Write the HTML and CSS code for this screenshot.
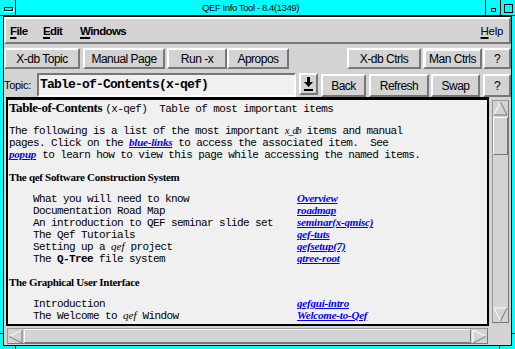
FILE: index.html
```html
<!DOCTYPE html>
<html lang="en">
<head>
    <meta charset="UTF-8">
    <meta name="viewport" content="width=device-width, initial-scale=1.0">
    <title>QEF Info Tool - 8.4(1349)</title>
    <link rel="stylesheet" href="styles.css">
</head>
<body>
<div class="window">
    <div class="titlebar">
        <div class="tb-box tb-menu"><span class="tb-bar"></span></div>
        <div class="tb-title">QEF Info Tool - 8.4(1349)</div>
        <div class="tb-box tb-right"><span class="tb-min"></span></div>
        <div class="tb-box tb-right"><span class="tb-max"></span></div>
    </div>

    <div class="client">
        <div class="menubar">
            <span class="menu menu-file"><u>F</u>ile</span>
            <span class="menu menu-edit"><u>E</u>dit</span>
            <span class="menu"><u>W</u>indows</span>
            <span class="menu menu-help"><u>H</u>elp</span>
        </div>

        <div class="toolbar">
            <button class="btn" style="width:76px">X-db Topic</button>
            <button class="btn" style="width:82px; margin-left:3px">Manual Page</button>
            <button class="btn" style="width:60px; margin-left:2px">Run -x</button>
            <button class="btn" style="width:62px">Apropos</button>
            <button class="btn push-right" style="width:74px">X-db Ctrls</button>
            <button class="btn btn-default" style="width:59px; margin-left:2px">Man Ctrls</button>
            <button class="btn" style="width:28px; margin-left:1px">?</button>
        </div>

        <div class="topicrow">
            <label class="topic-label">Topic:</label>
            <div class="topic-input">Table-of-Contents(x-qef)</div>
            <button class="btn btn-icon" title="Load">
                <svg width="9" height="14" viewBox="0 0 9 14">
                    <rect x="3" y="0" width="3" height="5" fill="#000"/>
                    <polygon points="0,5 9,5 4.5,10" fill="#000"/>
                    <rect x="0" y="12" width="9" height="2" fill="#000"/>
                </svg>
            </button>
            <button class="btn btn-tall" style="width:45px; margin-left:3px">Back</button>
            <button class="btn btn-tall" style="width:60px; margin-left:3px">Refresh</button>
            <button class="btn btn-tall" style="width:49px; margin-left:2px">Swap</button>
            <button class="btn btn-tall" style="width:28px; margin-left:3px">?</button>
        </div>

        <div class="viewer">
            <div class="pane">
                <div class="doc-title"><span class="h1">Table-of-Contents</span><span class="mono">(x-qef)  Table of most important items</span></div>

                <div class="para">
                    <div class="ln">The following is a list of the most important <i class="em em-tight">x_db</i> items and manual</div>
                    <div class="ln">pages. Click on the <a class="lnk">blue-links</a> to access the associated item.  See</div>
                    <div class="ln"><a class="lnk">popup</a> to learn how to view this page while accessing the named items.</div>
                </div>

                <div class="sect">The qef Software Construction System</div>
                <div class="list">
                    <div class="row"><span class="item">What you will need to know</span><a class="lnk">Overview</a></div>
                    <div class="row"><span class="item">Documentation Road Map</span><a class="lnk">roadmap</a></div>
                    <div class="row"><span class="item">An introduction to QEF seminar slide set</span><a class="lnk">seminar(x-qmisc)</a></div>
                    <div class="row"><span class="item">The Qef Tutorials</span><a class="lnk">qef-tuts</a></div>
                    <div class="row"><span class="item">Setting up a <i class="em">qef</i> project</span><a class="lnk">qefsetup(7)</a></div>
                    <div class="row"><span class="item">The <b>Q-Tree</b> file system</span><a class="lnk">qtree-root</a></div>
                </div>

                <div class="sect sect-gui">The Graphical User Interface</div>
                <div class="list">
                    <div class="row"><span class="item">Introduction</span><a class="lnk">qefgui-intro</a></div>
                    <div class="row"><span class="item">The Welcome to <i class="em">qef</i> Window</span><a class="lnk">Welcome-to-Qef</a></div>
                </div>
            </div>

            <div class="vscroll">
                <div class="arrow">
                    <svg width="15" height="15" viewBox="0 0 15 15">
                        <polygon points="7.5,1 14,14 1,14" fill="#d3d3d3"/>
                        <line x1="7.5" y1="1" x2="1" y2="14" stroke="#fff"/>
                        <line x1="7.5" y1="1" x2="14" y2="14" stroke="#777"/>
                        <line x1="1" y1="14" x2="14" y2="14" stroke="#777"/>
                    </svg>
                </div>
                <div class="thumb thumb-v"></div>
                <div class="trough"></div>
                <div class="arrow">
                    <svg width="15" height="15" viewBox="0 0 15 15">
                        <polygon points="1,1 14,1 7.5,14" fill="#d3d3d3"/>
                        <line x1="1" y1="1" x2="14" y2="1" stroke="#fff"/>
                        <line x1="1" y1="1" x2="7.5" y2="14" stroke="#fff"/>
                        <line x1="14" y1="1" x2="7.5" y2="14" stroke="#777"/>
                    </svg>
                </div>
            </div>
        </div>

        <div class="hscroll">
            <div class="arrow">
                <svg width="15" height="15" viewBox="0 0 15 15">
                    <polygon points="1,7.5 14,1 14,14" fill="#d3d3d3"/>
                    <line x1="1" y1="7.5" x2="14" y2="1" stroke="#fff"/>
                    <line x1="1" y1="7.5" x2="14" y2="14" stroke="#777"/>
                    <line x1="14" y1="1" x2="14" y2="14" stroke="#777"/>
                </svg>
            </div>
            <div class="thumb thumb-h"></div>
            <div class="arrow">
                <svg width="15" height="15" viewBox="0 0 15 15">
                    <polygon points="1,1 14,7.5 1,14" fill="#d3d3d3"/>
                    <line x1="1" y1="1" x2="14" y2="7.5" stroke="#fff"/>
                    <line x1="1" y1="1" x2="1" y2="14" stroke="#fff"/>
                    <line x1="1" y1="14" x2="14" y2="7.5" stroke="#777"/>
                </svg>
            </div>
        </div>
    </div>

    <!-- resize corner ticks on the frame -->
    <span class="tick tick-bl"></span>
    <span class="tick tick-br"></span>
    <span class="tick tick-lb"></span>
    <span class="tick tick-rb"></span>
</div>
</body>
</html>
```

FILE: styles.css
```css
* {
    box-sizing: border-box;
}
body {
    margin: 0;
    background: #00ffff;
    font-family: "Liberation Sans", Arial, sans-serif;
    color: #000;
}
.window {
    position: relative;
    width: 515px;
    height: 349px;
    background: #00ffff;
    overflow: hidden;
}

/* title bar */
.titlebar {
    display: flex;
    height: 16px;
    border-bottom: 1px solid #000;
}
.tb-box {
    width: 16px;
    height: 15px;
}
.tb-menu {
    border-right: 1px solid #000;
    padding: 7px 0 0 4px;
}
.tb-bar {
    display: block;
    width: 9px;
    height: 4px;
    border: 1px solid #000;
    box-shadow: 1px 1px 0 #fff;
}
.tb-title {
    flex: 1;
    text-align: center;
    font-size: 9.5px;
    letter-spacing: -0.4px;
    line-height: 15px;
}
.tb-right {
    width: 15px;
    border-left: 1px solid #000;
    display: flex;
    align-items: center;
    justify-content: center;
}
.tb-min {
    width: 5px;
    height: 4px;
    border: 1px solid #000;
    margin-top: 5px;
}
.tb-max {
    width: 9px;
    height: 9px;
    border: 1px solid #000;
    margin-top: 1px;
}

/* main client area */
.client {
    margin: 0 3px;
    height: 330px;
    border: 1px solid #000;
    background: #d3d3d3;
    display: flex;
    flex-direction: column;
}
.menubar {
    height: 27px;
    border: 2px solid;
    border-color: #fff #777 #777 #fff;
    display: flex;
    align-items: center;
    padding: 0 6px 0 4px;
    font-size: 11.5px;
    font-weight: bold;
    letter-spacing: -0.6px;
}
.menu u {
    text-decoration-thickness: 2px;
    text-underline-offset: 2px;
}
.menu-file {
    width: 33px;
}
.menu-edit {
    width: 37px;
}
.menu-help {
    margin-left: auto;
    font-weight: normal;
    letter-spacing: -0.3px;
}

.toolbar {
    display: flex;
    margin-top: 4px;
    height: 21px;
}
.topicrow {
    display: flex;
    margin-top: 4px;
    height: 24px;
}
.btn {
    height: 21px;
    padding: 0;
    border: 2px solid;
    border-color: #fff #777 #777 #fff;
    background: #d3d3d3;
    font-family: "Liberation Sans", Arial, sans-serif;
    font-size: 12px;
    letter-spacing: -0.5px;
    color: #000;
    display: flex;
    align-items: center;
    justify-content: center;
}
.push-right {
    margin-left: auto;
}
.btn-default {
    box-shadow: inset 1px 1px 0 #fff;
}
.btn-tall {
    height: 23px;
    margin-top: 1px;
}
.btn-icon {
    width: 19px;
    height: 22px;
    margin-left: 3px;
}

.topic-label {
    width: 33px;
    font-size: 11px;
    letter-spacing: -0.3px;
    line-height: 24px;
}
.topic-input {
    width: 259px;
    height: 24px;
    border: 2px solid;
    border-color: #777 #fff #fff #777;
    background: #f0f0f0;
    padding-left: 1px;
    font-family: "Liberation Mono", "Courier New", monospace;
    font-weight: bold;
    font-size: 13px;
    letter-spacing: -0.8px;
    line-height: 20px;
    white-space: pre;
}

/* viewer */
.viewer {
    display: flex;
}
.pane {
    margin-left: 2px;
    width: 483px;
    height: 229px;
    border: 2px solid #000;
    border-top-width: 3px;
    background: #f0f0f0;
    padding-left: 1px;
    overflow: hidden;
    font-family: "Liberation Mono", "Courier New", monospace;
    font-size: 11px;
    letter-spacing: -0.6px;
    line-height: 12px;
}
.doc-title {
    height: 16px;
    line-height: 16px;
    white-space: pre;
}
.h1 {
    font-family: "Liberation Serif", "Times New Roman", serif;
    font-weight: bold;
    font-size: 13px;
    letter-spacing: -0.4px;
    margin-right: 3px;
}
.para {
    margin-top: 9px;
}
.ln, .row {
    height: 12px;
    white-space: pre;
}
.row {
    display: flex;
    align-items: baseline;
}
.item {
    width: 288px;
    padding-left: 24px;
}
.sect {
    margin-top: 10px;
    height: 12px;
    font-family: "Liberation Serif", "Times New Roman", serif;
    font-weight: bold;
    font-size: 11px;
    letter-spacing: -0.3px;
}
.sect-gui {
    margin-top: 11px;
}
.list {
    margin-top: 10px;
}
.lnk {
    color: #0000ff;
    text-decoration: underline;
    text-underline-offset: 1px;
    font-family: "Liberation Serif", "Times New Roman", serif;
    font-weight: bold;
    font-style: italic;
    font-size: 11px;
    letter-spacing: -0.2px;
    line-height: 10px;
}
.em {
    font-family: "Liberation Serif", "Times New Roman", serif;
    font-size: 11px;
    letter-spacing: 0;
    line-height: 10px;
}
.em-tight {
    font-size: 10px;
    letter-spacing: -1px;
}

/* scrollbars */
.vscroll {
    margin: 3px 0 0 3px;
    width: 17px;
    height: 223px;
    border: 1px solid;
    border-color: #999 #777 #777 #999;
    display: flex;
    flex-direction: column;
}
.arrow {
    width: 15px;
    height: 15px;
    display: flex;
}
.thumb {
    border: 1px solid;
    border-color: #fff #777 #777 #fff;
    background: #d3d3d3;
}
.thumb-v {
    height: 38px;
    margin-top: 1px;
}
.trough {
    flex: 1;
}
.hscroll {
    margin: 2px 0 0 3px;
    width: 481px;
    height: 16px;
    border: 1px solid;
    border-color: #999 #777 #777 #999;
    display: flex;
}
.thumb-h {
    flex: 1;
    margin: 0 1px;
}

/* frame corner ticks */
.tick {
    position: absolute;
    background: #000;
}
.tick-bl {
    left: 15px;
    top: 346px;
    width: 1px;
    height: 3px;
}
.tick-br {
    left: 499px;
    top: 346px;
    width: 1px;
    height: 3px;
}
.tick-lb {
    left: 0;
    top: 333px;
    width: 3px;
    height: 1px;
}
.tick-rb {
    left: 512px;
    top: 333px;
    width: 3px;
    height: 1px;
}
```
